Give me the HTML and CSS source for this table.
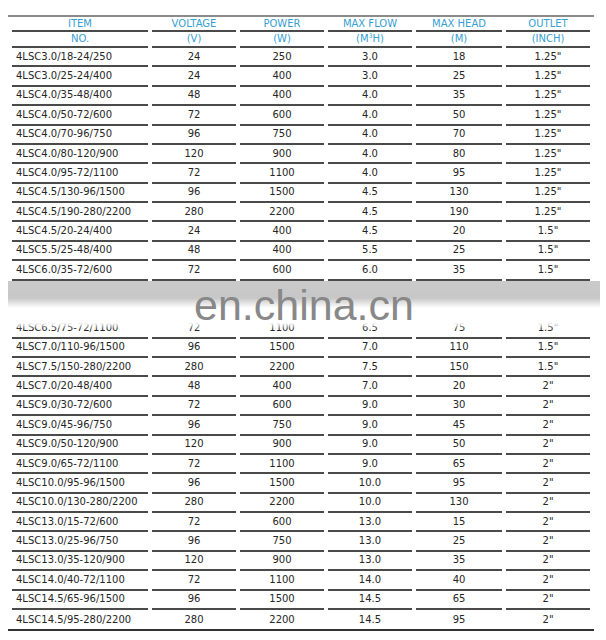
FILE: index.html
```html
<!DOCTYPE html>
<html>
<head>
<meta charset="utf-8">
<link rel="stylesheet" href="styles.css">
</head>
<body>
<div class="sheet">
<table class="spec">
<colgroup><col class="c1"><col class="cn"><col class="cn"><col class="cn"><col class="c5"><col class="cn"></colgroup>
<tr class="h"><td>ITEM</td><td>VOLTAGE</td><td>POWER</td><td>MAX FLOW</td><td>MAX HEAD</td><td>OUTLET</td></tr>
<tr class="h"><td>NO.</td><td>(V)</td><td>(W)</td><td>(M<sup>3</sup>H)</td><td>(M)</td><td>(INCH)</td></tr>
<tr><td>4LSC3.0/18-24/250</td><td>24</td><td>250</td><td>3.0</td><td>18</td><td>1.25"</td></tr>
<tr><td>4LSC3.0/25-24/400</td><td>24</td><td>400</td><td>3.0</td><td>25</td><td>1.25"</td></tr>
<tr><td>4LSC4.0/35-48/400</td><td>48</td><td>400</td><td>4.0</td><td>35</td><td>1.25"</td></tr>
<tr><td>4LSC4.0/50-72/600</td><td>72</td><td>600</td><td>4.0</td><td>50</td><td>1.25"</td></tr>
<tr><td>4LSC4.0/70-96/750</td><td>96</td><td>750</td><td>4.0</td><td>70</td><td>1.25"</td></tr>
<tr><td>4LSC4.0/80-120/900</td><td>120</td><td>900</td><td>4.0</td><td>80</td><td>1.25"</td></tr>
<tr><td>4LSC4.0/95-72/1100</td><td>72</td><td>1100</td><td>4.0</td><td>95</td><td>1.25"</td></tr>
<tr><td>4LSC4.5/130-96/1500</td><td>96</td><td>1500</td><td>4.5</td><td>130</td><td>1.25"</td></tr>
<tr><td>4LSC4.5/190-280/2200</td><td>280</td><td>2200</td><td>4.5</td><td>190</td><td>1.25"</td></tr>
<tr><td>4LSC4.5/20-24/400</td><td>24</td><td>400</td><td>4.5</td><td>20</td><td>1.5"</td></tr>
<tr><td>4LSC5.5/25-48/400</td><td>48</td><td>400</td><td>5.5</td><td>25</td><td>1.5"</td></tr>
<tr><td>4LSC6.0/35-72/600</td><td>72</td><td>600</td><td>6.0</td><td>35</td><td>1.5"</td></tr>
<tr><td>&nbsp;</td><td></td><td></td><td></td><td></td><td></td></tr>
<tr><td>&nbsp;</td><td></td><td></td><td></td><td></td><td></td></tr>
<tr><td>4LSC6.5/75-72/1100</td><td>72</td><td>1100</td><td>6.5</td><td>75</td><td>1.5"</td></tr>
<tr><td>4LSC7.0/110-96/1500</td><td>96</td><td>1500</td><td>7.0</td><td>110</td><td>1.5"</td></tr>
<tr><td>4LSC7.5/150-280/2200</td><td>280</td><td>2200</td><td>7.5</td><td>150</td><td>1.5"</td></tr>
<tr><td>4LSC7.0/20-48/400</td><td>48</td><td>400</td><td>7.0</td><td>20</td><td>2"</td></tr>
<tr><td>4LSC9.0/30-72/600</td><td>72</td><td>600</td><td>9.0</td><td>30</td><td>2"</td></tr>
<tr><td>4LSC9.0/45-96/750</td><td>96</td><td>750</td><td>9.0</td><td>45</td><td>2"</td></tr>
<tr><td>4LSC9.0/50-120/900</td><td>120</td><td>900</td><td>9.0</td><td>50</td><td>2"</td></tr>
<tr><td>4LSC9.0/65-72/1100</td><td>72</td><td>1100</td><td>9.0</td><td>65</td><td>2"</td></tr>
<tr><td>4LSC10.0/95-96/1500</td><td>96</td><td>1500</td><td>10.0</td><td>95</td><td>2"</td></tr>
<tr><td>4LSC10.0/130-280/2200</td><td>280</td><td>2200</td><td>10.0</td><td>130</td><td>2"</td></tr>
<tr><td>4LSC13.0/15-72/600</td><td>72</td><td>600</td><td>13.0</td><td>15</td><td>2"</td></tr>
<tr><td>4LSC13.0/25-96/750</td><td>96</td><td>750</td><td>13.0</td><td>25</td><td>2"</td></tr>
<tr><td>4LSC13.0/35-120/900</td><td>120</td><td>900</td><td>13.0</td><td>35</td><td>2"</td></tr>
<tr><td>4LSC14.0/40-72/1100</td><td>72</td><td>1100</td><td>14.0</td><td>40</td><td>2"</td></tr>
<tr><td>4LSC14.5/65-96/1500</td><td>96</td><td>1500</td><td>14.5</td><td>65</td><td>2"</td></tr>
<tr class="last"><td>4LSC14.5/95-280/2200</td><td>280</td><td>2200</td><td>14.5</td><td>95</td><td>2"</td></tr>
</table>
<div class="wm-fade"></div>
<div class="wm-band"></div>
<div class="wm-text">en.china.cn</div>
</div>
</body>
</html>
```
FILE: styles.css
```css
html, body {
  margin: 0;
  padding: 0;
  background: #fff;
}
.sheet {
  position: relative;
  width: 606px;
  height: 640px;
  padding: 15px 0 0 8px;
  box-sizing: border-box;
  font-family: "DejaVu Sans", Verdana, sans-serif;
  font-size: 10px;
  color: #262626;
}
.spec {
  border-collapse: separate;
  border-spacing: 4px 0;
  width: 586px;
  table-layout: fixed;
  border-top: 2px solid #8a8a8a;
  border-bottom: 2px solid #333;
}
.c1 { width: 136px; }
.cn { width: 84px; }
.c5 { width: 86px; }
.spec td {
  box-sizing: border-box;
  height: 19.38px;
  padding: 0;
  border-bottom: 2px solid #4a4a4a;
  text-align: center;
  vertical-align: middle;
  white-space: nowrap;
  line-height: 12px;
}
.spec td:first-child {
  text-align: left;
  padding-left: 4px;
}
.spec tr.h td {
  height: 16px;
  color: #36a0d2;
  text-align: center;
  padding-left: 0;
}
.spec tr.h:first-child td {
  height: 15px;
}
.spec tr.last td {
  border-bottom: none;
}
.spec sup {
  font-size: 6px;
  line-height: 0;
  vertical-align: 4px;
}
.wm-fade {
  position: absolute;
  left: 4px;
  top: 298px;
  width: 598px;
  height: 31px;
  background: linear-gradient(to bottom, #fff 0, #fff 25px, rgba(255,255,255,0) 31px);
}
.wm-band {
  position: absolute;
  left: 8px;
  top: 281px;
  width: 592px;
  height: 27px;
  background: linear-gradient(to bottom, #cacaca 0, #c7c7c7 17px, rgba(200,200,200,0) 27px);
}
.wm-text {
  position: absolute;
  left: 194px;
  top: 284px;
  font-family: "Liberation Sans", Arial, sans-serif;
  font-size: 43px;
  line-height: 43px;
  color: #888;
  white-space: nowrap;
}
```
